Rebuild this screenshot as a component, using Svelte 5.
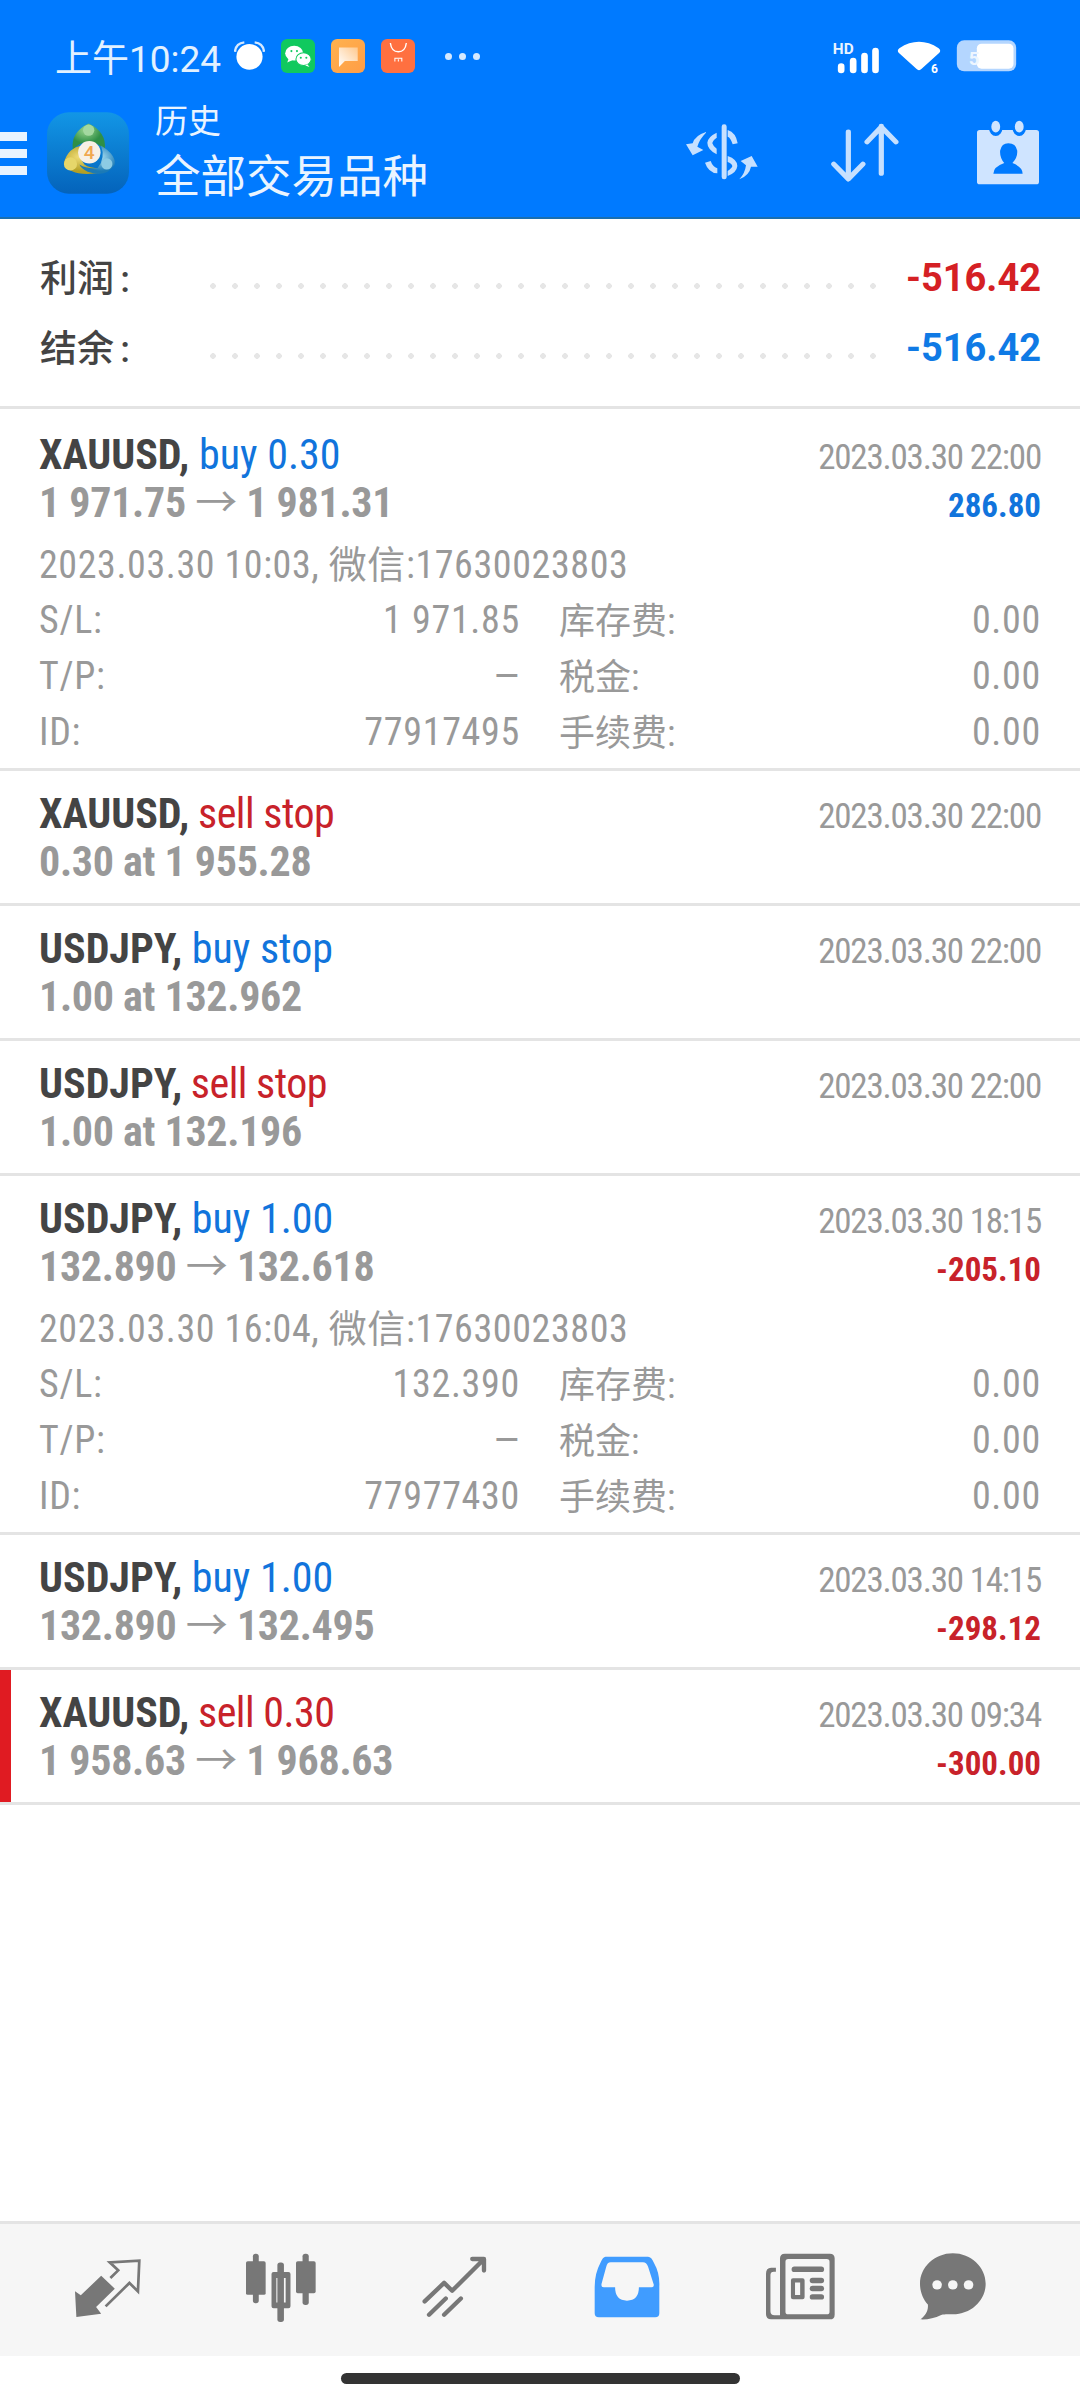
<script>
  const detail = (date, sl, id) => ({ date, sl, id });
  const orders = [
    { sym: 'XAUUSD,', side: 'buy 0.30', kind: 'buy', price: '1 971.75', to: '1 981.31', time: '2023.03.30 22:00', val: '286.80', valKind: 'buy', d: detail('2023.03.30 10:03', '1 971.85', '77917495') },
    { sym: 'XAUUSD,', side: 'sell stop', kind: 'sell', line: '0.30 at 1 955.28', time: '2023.03.30 22:00' },
    { sym: 'USDJPY,', side: 'buy stop', kind: 'buy', line: '1.00 at 132.962', time: '2023.03.30 22:00' },
    { sym: 'USDJPY,', side: 'sell stop', kind: 'sell', line: '1.00 at 132.196', time: '2023.03.30 22:00' },
    { sym: 'USDJPY,', side: 'buy 1.00', kind: 'buy', price: '132.890', to: '132.618', time: '2023.03.30 18:15', val: '-205.10', valKind: 'sell', d: detail('2023.03.30 16:04', '132.390', '77977430') },
    { sym: 'USDJPY,', side: 'buy 1.00', kind: 'buy', price: '132.890', to: '132.495', time: '2023.03.30 14:15', val: '-298.12', valKind: 'sell' },
    { sym: 'XAUUSD,', side: 'sell 0.30', kind: 'sell', price: '1 958.63', to: '1 968.63', time: '2023.03.30 09:34', val: '-300.00', valKind: 'sell', mark: true }
  ];
</script>

<div class="page">
  <header class="head">
    <div class="status">
      <span class="clock">上午10:24</span>
      <svg class="alarm" preserveAspectRatio="none" viewBox="675 128 90 92"><circle cx="720" cy="175" r="38" fill="#fff"/><path d="M678 160Q680 135 705 132M762 160Q760 135 735 132" fill="none" stroke="#d5e9ff" stroke-width="7"/></svg>
      <svg class="app" preserveAspectRatio="none" viewBox="810 120 98 101"><rect x="810" y="120" width="98" height="101" rx="18" fill="#10c95e"/><ellipse cx="848" cy="162" rx="26" ry="22" fill="#fff"/><path d="M832 178l-4 12 14-7z" fill="#fff"/><ellipse cx="875" cy="180" rx="22" ry="19" fill="#fff" stroke="#10c95e" stroke-width="3"/><path d="M886 195l6 8-12-4z" fill="#fff"/><circle cx="840" cy="156" r="3" fill="#10c95e"/><circle cx="856" cy="156" r="3" fill="#10c95e"/><circle cx="867" cy="176" r="3" fill="#10c95e"/><circle cx="883" cy="176" r="3" fill="#10c95e"/></svg>
      <svg class="app" preserveAspectRatio="none" viewBox="955 120 98 101"><defs><linearGradient id="og" x1="0" y1="0" x2="1" y2="1"><stop offset="0" stop-color="#ffb24f"/><stop offset="1" stop-color="#ff9d46"/></linearGradient><linearGradient id="pg" x1="0" y1="1" x2="1" y2="0"><stop offset="0" stop-color="#fff"/><stop offset="1" stop-color="#ffc98e"/></linearGradient></defs><rect x="955" y="120" width="98" height="101" rx="18" fill="url(#og)"/><path d="M978 145H1032V185H995L978 203Z" fill="url(#pg)"/></svg>
      <svg class="app" preserveAspectRatio="none" viewBox="1100 120 98 101"><rect x="1100" y="120" width="98" height="101" rx="18" fill="#ff7040"/><path d="M1127 132Q1130 158 1150 158Q1170 158 1173 132" fill="none" stroke="#fff" stroke-width="4"/><path d="M1140 187V177H1160V187M1150 180V187" fill="none" stroke="#fff" stroke-width="3"/></svg>
      <span class="dots"><i></i><i></i><i></i></span>
      <span class="grow"></span>
      <svg class="sys-sig" viewBox="38 6 140 108"><text x="37" y="53" font-size="46" font-weight="700" fill="#eaf4ff" font-family="Roboto">HD</text><g fill="#fff"><rect x="52" y="82" width="20" height="30" rx="10"/><rect x="88" y="65" width="20" height="47" rx="10"/><rect x="122" y="50" width="20" height="62" rx="10"/><rect x="155" y="35" width="20" height="77" rx="10"/></g></svg>
      <svg class="sys-wifi" viewBox="226 20 138 104"><path d="M236 44Q295 6 354 44Q362 50 356 58L303 106Q295 114 287 106L234 58Q228 50 236 44Z" fill="#fff"/><circle cx="346" cy="102" r="22" fill="#007aff"/><text x="331" y="119" font-size="36" font-weight="700" fill="#fff" font-family="Roboto">6</text></svg>
      <svg class="sys-bat" viewBox="408 14 182 96"><rect x="410" y="15" width="178" height="93" rx="22" fill="#b4d6ff"/><rect x="470" y="25" width="110" height="75" rx="14" fill="#fff"/><text x="446" y="88" font-size="56" font-weight="700" fill="#eef6ff" font-family="Roboto">5</text></svg>
    </div>
    <div class="bar">
      <span class="menu"><i></i><i></i><i></i></span>
      <svg class="logo" viewBox="17 22 248 246">
        <defs>
          <linearGradient id="lg" x1="0" y1="0" x2="0" y2="1"><stop offset="0" stop-color="#1296e6"/><stop offset="1" stop-color="#0463bb"/></linearGradient>
          <radialGradient id="gr" cx=".4" cy=".25"><stop offset="0" stop-color="#9ad58f"/><stop offset="1" stop-color="#2f8f46"/></radialGradient>
          <radialGradient id="ye" cx=".35" cy=".4"><stop offset="0" stop-color="#f0dd78"/><stop offset="1" stop-color="#b39f25"/></radialGradient>
          <radialGradient id="bl" cx=".6" cy=".4"><stop offset="0" stop-color="#a6dcef"/><stop offset="1" stop-color="#1b7ab6"/></radialGradient>
        </defs>
        <rect x="17" y="22" width="248" height="246" rx="66" fill="url(#lg)"/>
        <path d="M95 135Q88 82 143 56Q198 82 192 135Q170 112 143 112Q115 112 95 135Z" fill="url(#gr)"/>
        <path d="M125 122Q80 128 68 175Q85 212 150 208Q190 205 202 190Q150 195 130 180Q108 150 125 122Z" fill="url(#ye)"/>
        <path d="M180 122Q226 150 222 180Q195 222 140 202Q120 192 115 180Q140 195 170 190Q195 160 180 122Z" fill="url(#bl)"/>
        <circle cx="143" cy="76" r="17" fill="#a3d8a0"/>
        <circle cx="88" cy="178" r="20" fill="#e6d66a"/>
        <circle cx="198" cy="178" r="17" fill="#8ccbe4"/>
        <circle cx="145" cy="143" r="34" fill="#f7f0e6"/>
        <text x="128" y="164" font-size="58" font-weight="500" fill="#f0a850" font-family="Roboto">4</text>
      </svg>
      <div class="titles">
        <span class="t1">历史</span>
        <span class="t2">全部交易品种</span>
      </div>
      <span class="grow"></span>
      <svg class="ic-ex" viewBox="0 0 255 225" fill="#c6e0ff">
        <rect x="125" y="25" width="15" height="165" rx="7"/>
        <path d="M143 42Q168 50 173 82L158 85Q152 65 143 62Z"/>
        <path d="M110 50V115Q82 100 82 80Q84 62 110 50ZM110 65Q97 75 97 82Q100 92 110 98Z" fill-rule="evenodd"/>
        <path d="M143 120Q172 130 172 150Q170 170 143 180ZM143 138V165Q157 155 157 150Q155 142 143 138Z" fill-rule="evenodd"/>
        <path d="M75 140L92 135Q98 152 112 157V172Q85 170 75 140Z"/>
        <path d="M78 48Q45 58 38 82L18 85L38 118L70 102L52 92Q58 70 78 50Z"/>
        <path d="M178 190Q208 178 213 152L233 152L215 120L182 135L198 148Q195 172 178 190Z"/>
      </svg>
      <svg class="ic-ar" preserveAspectRatio="none" viewBox="846 368 196 178" fill="none" stroke="#c6e0ff" stroke-width="15" stroke-linecap="round" stroke-linejoin="round">
        <path d="M896 395V535M854 492L896 537L938 492M991 520V378M950 425L991 380L1033 425"/>
      </svg>
      <svg class="ic-co" preserveAspectRatio="none" viewBox="1268 358 182 196">
        <rect x="1268" y="388" width="182" height="164" rx="8" fill="#cfe4ff"/>
        <ellipse cx="1323" cy="380" rx="20" ry="26" fill="#007aff"/>
        <ellipse cx="1392" cy="380" rx="20" ry="26" fill="#007aff"/>
        <ellipse cx="1323" cy="378" rx="13" ry="18" fill="#cfe4ff"/>
        <ellipse cx="1392" cy="378" rx="13" ry="18" fill="#cfe4ff"/>
        <path d="M1316 520Q1316 500 1348 488Q1334 470 1336 450Q1340 428 1360 428Q1382 428 1386 450Q1388 470 1372 488Q1402 500 1402 520Z" fill="#007aff"/>
      </svg>
    </div>
  </header>

  <section class="summary">
    <div class="sum"><span class="lab">利润 :</span><span class="lead"></span><b class="sell">-516.42</b></div>
    <div class="sum"><span class="lab">结余 :</span><span class="lead"></span><b class="buy">-516.42</b></div>
  </section>

  <main class="list">
    {#each orders as o}
      <article class="order" class:mark={o.mark}>
        <div class="top">
          <div class="left">
            <div class="l1"><b>{o.sym}</b> <span class={o.kind}>{o.side}</span></div>
            <div class="l2">
              {#if o.line}{o.line}{:else}{o.price} <span class="arr">→</span> {o.to}{/if}
            </div>
          </div>
          <div class="right">
            <div class="time">{o.time}</div>
            {#if o.val}<div class="val {o.valKind}">{o.val}</div>{/if}
          </div>
        </div>
        {#if o.d}
          <div class="open">{o.d.date}, 微信:17630023803</div>
          <div class="grid">
            <span>S/L:</span><span class="r">{o.d.sl}</span><span class="k">库存费:</span><span class="r">0.00</span>
            <span>T/P:</span><span class="r">—</span><span class="k">税金:</span><span class="r">0.00</span>
            <span>ID:</span><span class="r">{o.d.id}</span><span class="k">手续费:</span><span class="r">0.00</span>
          </div>
        {/if}
      </article>
    {/each}
  </main>

  <nav class="nav">
    <svg class="n1" preserveAspectRatio="none" viewBox="218 145 194 180"><path d="M295 198L335 237L280 292L295 312L222 322L218 245L235 257Z" fill="#777"/><path d="M322 205L345 182L320 158L407 153L403 245L378 220L308 290" fill="none" stroke="#777" stroke-width="8"/></svg>
    <svg class="n2" preserveAspectRatio="none" viewBox="715 130 203 206" fill="#777">
      <rect x="735" y="132" width="17" height="148" rx="8"/><rect x="715" y="155" width="57" height="100" rx="5"/>
      <rect x="806" y="158" width="19" height="178" rx="8"/><path fill-rule="evenodd" d="M795 187H838Q844 187 844 193V289Q844 295 838 295H795Q789 295 789 289V193Q789 187 795 187ZM803 205V278H830V205Z"/>
      <rect x="879" y="132" width="18" height="153" rx="8"/><rect x="860" y="155" width="57" height="95" rx="5"/>
    </svg>
    <svg class="n3" preserveAspectRatio="none" viewBox="1222 138 194 184" fill="none" stroke="#777" stroke-width="13" stroke-linecap="round" stroke-linejoin="round">
      <path d="M1230 275L1288 219L1312 243L1402 152M1372 147H1407V182M1243 315L1293 266M1288 315L1338 266"/>
    </svg>
    <svg class="n4" preserveAspectRatio="none" viewBox="156 138 194 186">
      <path d="M190 140H315Q325 140 332 158Q350 190 348 230V310Q348 322 336 322H170Q158 322 158 310V230Q158 190 175 158Q182 140 190 140Z" fill="#409cff"/>
      <path d="M205 157H300Q310 157 315 170L332 225Q332 232 325 232H288Q288 272 253 272Q218 272 218 232H185Q177 232 178 222L192 170Q195 157 205 157Z" fill="#f6f6f6"/>
    </svg>
    <svg class="n5" preserveAspectRatio="none" viewBox="657 130 202 200" fill="#777">
      <path fill-rule="evenodd" d="M712 132H844Q858 132 858 146V314Q858 328 844 328H672Q657 328 657 313V192Q657 174 672 174H686V186H680Q670 186 670 196V304Q670 316 682 316H698V146Q698 132 712 132ZM722 148Q714 148 714 156V305Q714 313 722 313H835Q843 313 843 305V156Q843 148 835 148Z"/>
      <rect x="732" y="170" width="95" height="17" rx="8"/>
      <path fill-rule="evenodd" d="M736 205H764Q770 205 770 211V262Q770 268 764 268H736Q730 268 730 262V211Q730 205 736 205ZM742 218V255H757V218Z"/>
      <rect x="785" y="204" width="42" height="16" rx="8"/><rect x="785" y="228" width="42" height="16" rx="8"/><rect x="785" y="253" width="42" height="16" rx="8"/>
    </svg>
    <svg class="n6" preserveAspectRatio="none" viewBox="1103 130 193 200">
      <path d="M1199 131C1252 131 1295 172 1295 222C1295 272 1252 313 1199 313C1185 313 1175 312 1165 315C1145 325 1125 329 1104 328C1118 318 1128 302 1126 284C1112 268 1103 246 1103 222C1103 172 1146 131 1199 131Z" fill="#777"/>
      <circle cx="1153" cy="225" r="14" fill="#f6f6f6"/><circle cx="1199" cy="225" r="14" fill="#f6f6f6"/><circle cx="1245" cy="225" r="14" fill="#f6f6f6"/>
    </svg>
  </nav>
  <div class="home"><i></i></div>
</div>

<style>
  :global(body) { margin: 0; background: #fff; }
  .page {
    width: 1080px; height: 2400px; display: flex; flex-direction: column; overflow: hidden;
    font-family: "Roboto", "Noto Sans CJK SC", sans-serif; color: #444;
  }
  .grow { flex: 1; }
  .head { height: 219px; background: #007aff; color: #fff; flex: none; border-bottom: 2px solid #1a6fb0; box-sizing: border-box; }
  .status { height: 88px; padding: 24px 62px 0 55px; display: flex; align-items: center; box-sizing: border-box; }
  .clock { font-size: 37px; color: #e2f1ff; width: 167px; white-space: nowrap; }
  .alarm { width: 31px; height: 31px; margin-left: 12px; }
  .app { width: 34px; height: 34px; margin-left: 16px; }
  .dots { display: flex; gap: 7px; margin-left: 30px; }
  .dots i { width: 7px; height: 7px; border-radius: 50%; background: #d5e9ff; }
  .sys-sig { width: 47px; height: 36px; }
  .sys-wifi { width: 46px; height: 35px; margin-left: 16px; margin-top: 3px; }
  .sys-bat { width: 63px; height: 32px; margin-left: 13px; }
  .bar { height: 129px; display: flex; align-items: center; padding-right: 41px; }
  .menu { width: 27px; display: flex; flex-direction: column; gap: 8px; margin-top: 2px; }
  .menu i { height: 9px; background: #e8f3ff; }
  .logo { width: 82px; height: 82px; margin-left: 20px; }
  .titles { display: flex; flex-direction: column; margin-left: 26px; color: #eaf4ff; margin-top: 8px; }
  .t1 { font-size: 33px; line-height: 42px; }
  .t2 { font-size: 45.5px; line-height: 70px; }
  .ic-ex { width: 85px; height: 75px; margin-top: 2px; }
  .ic-ar { width: 68px; height: 59px; margin-left: 66px; }
  .ic-co { width: 62px; height: 65px; margin-left: 78px; }
  .summary { height: 190px; flex: none; padding: 24px 39px 0 40px; box-sizing: border-box; border-bottom: 3px solid #e4e4e4; }
  .sum { height: 70px; display: flex; align-items: center; }
  .lab { font-size: 37px; font-weight: 500; color: #444; width: 162px; white-space: nowrap; word-spacing: -3px; margin-top: -5px; }
  .lead { flex: 1; height: 6px; margin-top: 16px; background: radial-gradient(circle 3px, #e6e6e6 90%, transparent 100%) 0 0 / 22px 6px repeat-x; margin-right: 24px; }
  .sum b { font-size: 38px; font-weight: 700; }
  .buy { color: #1174dc; }
  .sell { color: #c8222a; }
  .sum .sell { color: #d52024; }
  .sum .buy { color: #0f7ae5; }
  .list { flex: 1; padding-top: 3px; }
  .order { padding: 19px 39px 0; border-bottom: 3px solid #e4e4e4; min-height: 135px; box-sizing: border-box; }
  .order.mark { box-shadow: inset 11px 0 0 #e01b22; }
  .top { display: flex; justify-content: space-between; }
  .l1 { font-size: 42px; line-height: 48px; white-space: nowrap; font-stretch: 75%; }
  .l1 b { font-weight: 700; }
  .l1 .sell { letter-spacing: -0.5px; margin-left: -1px; }
  .l2 { font-size: 42px; line-height: 47px; font-weight: 700; color: #999; white-space: nowrap; font-stretch: 75%; letter-spacing: -0.3px; }
  .arr { font-weight: 400; }
  .right { text-align: right; padding-top: 5px; }
  .time { font-size: 35px; line-height: 44px; color: #999; font-stretch: 75%; letter-spacing: -1.2px; }
  .val { font-size: 33px; line-height: 52px; font-weight: 700; font-stretch: 75%; }
  .open { font-size: 38px; line-height: 44px; color: #999; margin-top: 11px; font-stretch: 75%; white-space: nowrap; letter-spacing: 0.6px; }
  .grid { display: grid; grid-template-columns: 214px 267px 1fr 100px; grid-auto-rows: 56px; font-size: 38px; font-stretch: 75%; color: #999; align-items: center; margin-top: 5px; padding-bottom: 8px; letter-spacing: 0.7px; }
  .grid .k { padding-left: 39px; font-size: 36px; letter-spacing: 0; margin-top: -4px; }
  .grid .r { text-align: right; }
  .nav { height: 135px; flex: none; background: #f6f6f6; border-top: 3px solid #e4e4e4; box-sizing: border-box; display: flex; padding: 0 0 0 75px; align-items: flex-start; }
  .n1 { width: 66px; height: 60px; margin-top: 34px; }
  .n2 { width: 70px; height: 69px; margin-left: 105px; margin-top: 29px; }
  .n3 { width: 65px; height: 61px; margin-left: 106px; margin-top: 32px; }
  .n4 { width: 66px; height: 62px; margin-left: 107px; margin-top: 32px; }
  .n5 { width: 69px; height: 67px; margin-left: 106px; margin-top: 29px; }
  .n6 { width: 66px; height: 67px; margin-left: 85px; margin-top: 29px; }
  .home { height: 44px; flex: none; display: flex; justify-content: center; padding-top: 17px; box-sizing: border-box; }
  .home i { width: 399px; height: 11px; border-radius: 6px; background: #333; }
</style>
